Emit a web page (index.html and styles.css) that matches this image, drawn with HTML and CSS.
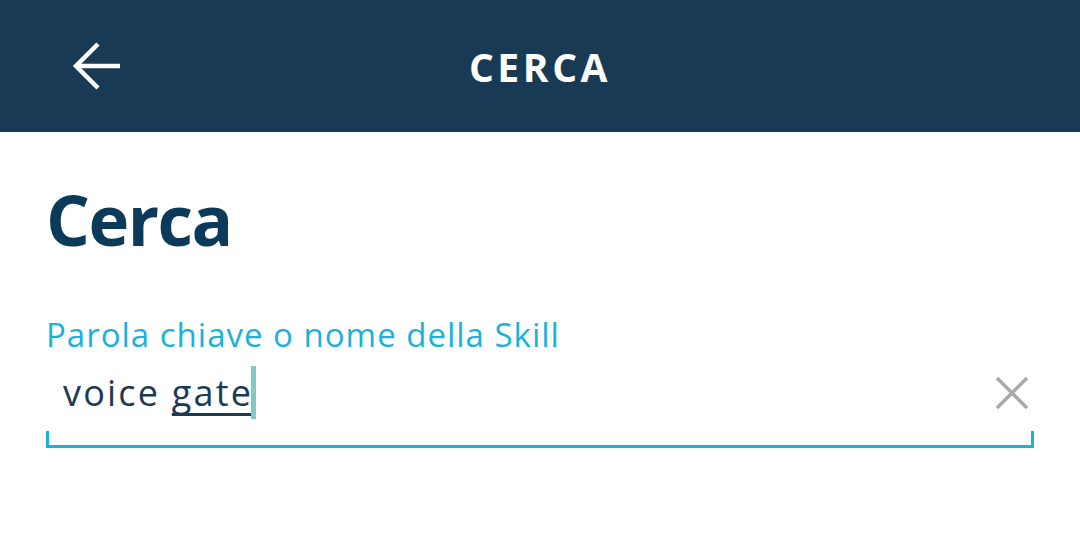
FILE: index.html
```html
<!DOCTYPE html>
<html lang="it">
<head>
    <meta charset="UTF-8">
    <meta name="viewport" content="width=device-width, initial-scale=1.0">
    <title>Cerca</title>
    <link rel="stylesheet" href="styles.css">
</head>
<body>

    <div class="topbar">
        <button class="back" aria-label="Indietro">
            <svg width="48" height="48" viewBox="0 0 48 48">
                <path d="M3 24 H48 M26 2 L4 24 L26 46" fill="none" stroke="#fff" stroke-width="4.5"/>
            </svg>
        </button>
        <div class="topbar-title">CERCA</div>
        <div></div>
    </div>

    <div class="content">
        <h1 class="page-title">Cerca</h1>

        <div class="field-label">Parola chiave o nome della Skill</div>
        <div class="field">
            <div class="field-value">voice <span class="composing">gate</span><span class="caret"></span></div>
            <button class="clear" aria-label="Cancella">
                <svg width="34" height="34" viewBox="0 0 34 34">
                    <path d="M2 2 L32 32 M32 2 L2 32" fill="none" stroke="#a9a9a9" stroke-width="3.5"/>
                </svg>
            </button>
        </div>
        <div class="field-line"></div>
    </div>

</body>
</html>
```

FILE: styles.css
```css
body {
    margin: 0;
    font-family: "Open Sans", Arial, sans-serif;
    background: #fff;
}
button {
    background: none;
    border: none;
    padding: 0;
    cursor: pointer;
}
.topbar {
    height: 132px;
    background-color: #183a54;
    display: grid;
    grid-template-columns: 1fr auto 1fr;
    align-items: center;
    padding: 0 72px;
}
.back {
    width: 48px;
    height: 48px;
    display: flex;
}
.topbar-title {
    color: #fff;
    font-size: 39px;
    font-weight: 700;
    letter-spacing: 3.6px;
    line-height: 1;
}
.content {
    padding: 0 46px;
}
.page-title {
    margin: 53px 0 0;
    font-size: 69px;
    font-weight: 700;
    letter-spacing: -1.5px;
    line-height: 1;
    color: #0b3a5a;
}
.field-label {
    margin-top: 64px;
    font-size: 33px;
    letter-spacing: 1px;
    line-height: 1;
    color: #18b2dc;
}
.field {
    display: flex;
    align-items: center;
    justify-content: space-between;
    padding: 15px 5px 12px 17px;
}
.field-value {
    font-size: 36px;
    letter-spacing: 2.2px;
    color: #1c3a52;
    display: flex;
    align-items: center;
    white-space: pre;
}
.composing {
    text-decoration: underline;
    text-decoration-thickness: 3px;
    text-decoration-skip-ink: none;
    text-underline-offset: 7px;
}
.caret {
    display: inline-block;
    width: 5px;
    height: 53px;
    margin-left: -2px;
    background-color: #80cbc1;
}
.clear {
    width: 34px;
    height: 34px;
    display: flex;
}
.field-line {
    height: 14px;
    border: 3px solid #18b2dc;
    border-top: none;
}
```
